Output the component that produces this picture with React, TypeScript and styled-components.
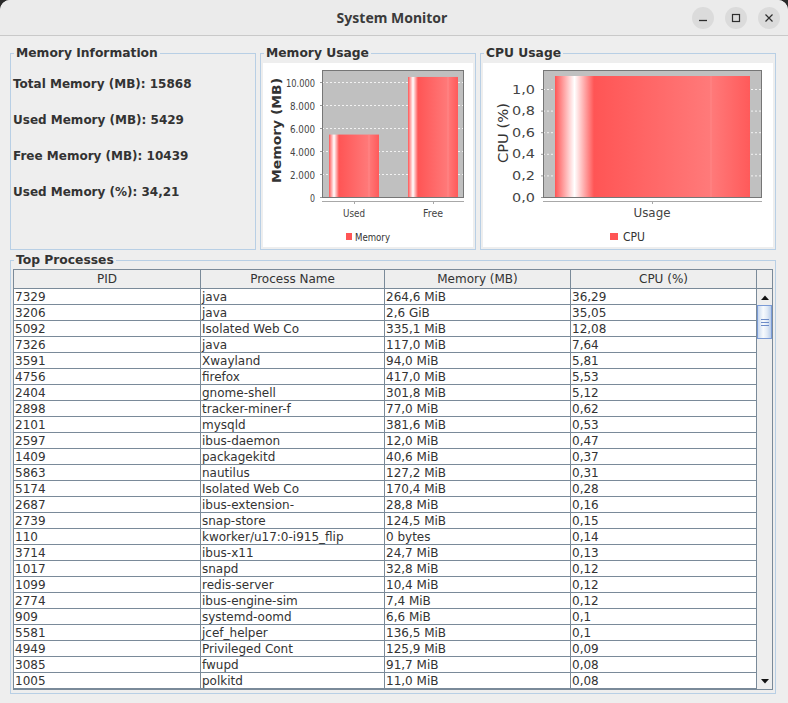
import React from "react";
import styled, { createGlobalStyle } from "styled-components";

const GlobalStyle = createGlobalStyle`
  html, body { margin: 0; padding: 0; background: #2a2a2a; }
  #root { width: 788px; height: 703px; }
  * { box-sizing: border-box; }
`;

const Window = styled.div`
  width: 788px;
  height: 703px;
  background: #eeeeee;
  border-radius: 10px 10px 0 0;
  overflow: hidden;
  display: flex;
  flex-direction: column;
  font-family: "DejaVu Sans", "Liberation Sans", sans-serif;
  color: #333333;
`;

const TitleBar = styled.header`
  height: 36px;
  flex: none;
  display: grid;
  grid-template-columns: 1fr auto 1fr;
  align-items: center;
  background: #ebebeb;
  border-bottom: 1px solid #c9c9c9;
`;

const TitleText = styled.div`
  grid-column: 2;
  font-family: "Noto Sans", "DejaVu Sans", sans-serif;
  font-weight: 700;
  font-size: 14px;
  color: #3b3b3b;
  transform: translateX(-2px);
`;

const WinButtons = styled.div`
  grid-column: 3;
  justify-self: end;
  display: flex;
  align-items: center;
  gap: 11px;
  padding-right: 8px;
`;

const WinButton = styled.div`
  width: 22px;
  height: 22px;
  border-radius: 50%;
  background: #dbdbdb;
  display: flex;
  align-items: center;
  justify-content: center;
`;

const Content = styled.main`
  flex: 1;
  display: flex;
  flex-direction: column;
  gap: 3px;
  padding: 10px 12px 9px 10px;
`;

const TopRow = styled.div`
  display: grid;
  grid-template-columns: 246px 216px 296px;
  column-gap: 4px;
  height: 204px;
`;

const Panel = styled.fieldset<{ $height?: number }>`
  margin: 0;
  min-width: 0;
  border: 1px solid #b8cfe5;
  padding: 0 2px 2px 2px;
  display: flex;
  flex-direction: column;
  height: ${(p) => (p.$height ? `${p.$height}px` : "100%")};
`;

const PanelTitle = styled.legend`
  font-weight: 700;
  font-size: 12.3px;
  line-height: 14px;
  padding: 0 2px;
  margin-left: 1px;
  color: #333333;
`;

const InfoList = styled.div`
  padding-top: 6px;
  display: flex;
  flex-direction: column;
`;

const InfoLabel = styled.div`
  height: 36px;
  line-height: 36px;
  font-weight: 700;
  font-size: 12px;
  white-space: nowrap;
`;

const ChartBox = styled.div<{ $w: number }>`
  margin-top: 3px;
  width: ${(p) => p.$w}px;
  height: 184px;
  background: #ffffff;
  flex: none;
  svg {
    display: block;
  }
`;

const Pane = styled.div`
  margin-top: 2px;
  border: 1px solid #7a8a99;
  display: grid;
  grid-template-columns: 743px 15px;
  grid-template-rows: 19px 400px;
  background: #ffffff;
`;

const ColGrid = styled.div`
  display: grid;
  grid-template-columns: 187px 184px 186px 186px;
`;

const HeaderCell = styled.div`
  background: #eeeeee;
  border-right: 1px solid #7a8a99;
  border-bottom: 1px solid #7a8a99;
  text-align: center;
  font-size: 12px;
  line-height: 17px;
  padding-top: 1px;
  color: #333333;
`;

const Corner = styled.div`
  background: #eeeeee;
  border-bottom: 1px solid #7a8a99;
`;

const Body = styled.div`
  display: flex;
  flex-direction: column;
`;

const Cell = styled.div`
  height: 16px;
  border-right: 1px solid #7a8a99;
  border-bottom: 1px solid #7a8a99;
  padding: 1px 0 0 1px;
  font-size: 12px;
  line-height: 14px;
  white-space: nowrap;
  overflow: hidden;
  color: #333333;
  background: #ffffff;
`;

const ScrollBar = styled.div`
  display: flex;
  flex-direction: column;
  background: #eeeeee;
`;

const ArrowButton = styled.div`
  height: 16px;
  flex: none;
  display: flex;
  align-items: center;
  justify-content: center;
  background: #eeeeee;
`;

const Thumb = styled.div`
  height: 34px;
  flex: none;
  border: 1px solid #7b9bd6;
  background: linear-gradient(to right, #c9d9ef, #f7fafd 40%, #e1eaf6 70%, #b9cde9);
  display: flex;
  flex-direction: column;
  align-items: center;
  justify-content: center;
  gap: 2px;
`;

const Grip = styled.div`
  width: 8px;
  height: 1px;
  background: #6d8cc8;
`;

const Track = styled.div`
  flex: 1;
`;

type Tick = { label: string; y: number; w: number };
type Bar = { x0: number; x1: number; top: number };
type Cat = { text: string; cx: number; w: number };

interface ChartProps {
  id: string;
  width: number;
  plot: { x0: number; x1: number; y0: number; y1: number };
  ticks: Tick[];
  tickFont: number;
  tickRight: number;
  yLabel: { text: string; cx: number; cy: number; len: number; size: number; bold: boolean };
  bars: Bar[];
  cats: Cat[];
  catFont: number;
  legend: { sx: number; sw: number; text: string; tx: number; tw: number; size: number };
}

const Chart: React.FC<ChartProps> = ({ id, width, plot, ticks, tickFont, tickRight, yLabel, bars, cats, catFont, legend }) => {
  const H = 184;
  return (
    <svg width={width} height={H} viewBox={`0 0 ${width} ${H}`}>
      <defs>
        <linearGradient id={id} x1="0" y1="0" x2="1" y2="0">
          <stop offset="0" stopColor="#ff5555" />
          <stop offset="0.1" stopColor="#ffffff" />
          <stop offset="0.2" stopColor="#ff5555" />
          <stop offset="0.8" stopColor="#ff7a7a" />
          <stop offset="1" stopColor="#ff5a5a" />
        </linearGradient>
      </defs>
      <rect x={plot.x0} y={plot.y0} width={plot.x1 - plot.x0} height={plot.y1 - plot.y0} fill="#c0c0c0" />
      {ticks.map((t) => (
        <line key={"g" + t.label} x1={plot.x0} x2={plot.x1} y1={t.y + 0.5} y2={t.y + 0.5} stroke="#ffffff" strokeWidth={0.8} strokeDasharray="2 2" />
      ))}
      {bars.map((b, i) => (
        <g key={"b" + i}>
          <rect x={b.x0} y={b.top} width={b.x1 - b.x0} height={plot.y1 - b.top} fill={`url(#${id})`} />
          <line x1={b.x0 + (b.x1 - b.x0) * 0.8} x2={b.x0 + (b.x1 - b.x0) * 0.8} y1={b.top} y2={plot.y1} stroke="#ff9090" strokeWidth={0.6} />
        </g>
      ))}
      <rect x={plot.x0 + 0.5} y={plot.y0 + 0.5} width={plot.x1 - plot.x0 - 1} height={plot.y1 - plot.y0} fill="none" stroke="#767676" strokeWidth={1} />
      {ticks.map((t) => (
        <g key={"t" + t.label}>
          <line x1={plot.x0 - 2} x2={plot.x0} y1={t.y + 0.5} y2={t.y + 0.5} stroke="#999999" strokeWidth={1} />
          <text
            x={tickRight - t.w}
            y={t.y + 0.5}
            dominantBaseline="central"
            fontFamily="DejaVu Sans, sans-serif"
            fontSize={tickFont}
            fill="#444444"
            textLength={t.w}
            lengthAdjust="spacingAndGlyphs"
          >
            {t.label}
          </text>
        </g>
      ))}
      <text
        transform={`translate(${yLabel.cx} ${yLabel.cy}) rotate(-90)`}
        x={-yLabel.len / 2}
        y={0}
        dominantBaseline="central"
        fontFamily="DejaVu Sans, sans-serif"
        fontSize={yLabel.size}
        fontWeight={yLabel.bold ? 700 : 400}
        fill="#333333"
        textLength={yLabel.len}
        lengthAdjust="spacingAndGlyphs"
      >
        {yLabel.text}
      </text>
      <line x1={plot.x0} x2={plot.x1} y1={138.5} y2={138.5} stroke="#a8a8a8" strokeWidth={1} />
      {cats.map((c) => (
        <g key={"c" + c.text}>
          <line x1={c.cx + 0.5} x2={c.cx + 0.5} y1={138} y2={141} stroke="#a8a8a8" strokeWidth={1} />
          <text
            x={c.cx - c.w / 2}
            y={150}
            dominantBaseline="central"
            fontFamily="DejaVu Sans, sans-serif"
            fontSize={catFont}
            fill="#444444"
            textLength={c.w}
            lengthAdjust="spacingAndGlyphs"
          >
            {c.text}
          </text>
        </g>
      ))}
      <rect x={legend.sx} y={170} width={legend.sw} height={7} fill="#ff5555" />
      <text
        x={legend.tx}
        y={173.5}
        dominantBaseline="central"
        fontFamily="DejaVu Sans, sans-serif"
        fontSize={legend.size}
        fill="#333333"
        textLength={legend.tw}
        lengthAdjust="spacingAndGlyphs"
      >
        {legend.text}
      </text>
    </svg>
  );
};

const memScale = (v: number) => 134 - v * 0.0115;

const rows: [string, string, string, string][] = [
  ["7329", "java", "264,6 MiB", "36,29"],
  ["3206", "java", "2,6 GiB", "35,05"],
  ["5092", "Isolated Web Co", "335,1 MiB", "12,08"],
  ["7326", "java", "117,0 MiB", "7,64"],
  ["3591", "Xwayland", "94,0 MiB", "5,81"],
  ["4756", "firefox", "417,0 MiB", "5,53"],
  ["2404", "gnome-shell", "301,8 MiB", "5,12"],
  ["2898", "tracker-miner-f", "77,0 MiB", "0,62"],
  ["2101", "mysqld", "381,6 MiB", "0,53"],
  ["2597", "ibus-daemon", "12,0 MiB", "0,47"],
  ["1409", "packagekitd", "40,6 MiB", "0,37"],
  ["5863", "nautilus", "127,2 MiB", "0,31"],
  ["5174", "Isolated Web Co", "170,4 MiB", "0,28"],
  ["2687", "ibus-extension-", "28,8 MiB", "0,16"],
  ["2739", "snap-store", "124,5 MiB", "0,15"],
  ["110", "kworker/u17:0-i915_flip", "0 bytes", "0,14"],
  ["3714", "ibus-x11", "24,7 MiB", "0,13"],
  ["1017", "snapd", "32,8 MiB", "0,12"],
  ["1099", "redis-server", "10,4 MiB", "0,12"],
  ["2774", "ibus-engine-sim", "7,4 MiB", "0,12"],
  ["909", "systemd-oomd", "6,6 MiB", "0,1"],
  ["5581", "jcef_helper", "136,5 MiB", "0,1"],
  ["4949", "Privileged Cont", "125,9 MiB", "0,09"],
  ["3085", "fwupd", "91,7 MiB", "0,08"],
  ["1005", "polkitd", "11,0 MiB", "0,08"],
];

const Tri: React.FC<{ up: boolean }> = ({ up }) => (
  <svg width="8" height="5" viewBox="0 0 8 5">
    <path d={up ? "M0 5 L4 0.5 L8 5 Z" : "M0 0 L4 4.5 L8 0 Z"} fill="#111111" />
  </svg>
);

export default function App() {
  const cpuTicks: Tick[] = ["0,0", "0,2", "0,4", "0,6", "0,8", "1,0"].map((l, i) => ({
    label: l,
    y: 134 - i * 21.6,
    w: 23,
  }));
  const memTicks: Tick[] = [
    { label: "0", y: memScale(0), w: 5 },
    { label: "2.000", y: memScale(2000), w: 25 },
    { label: "4.000", y: memScale(4000), w: 25 },
    { label: "6.000", y: memScale(6000), w: 25 },
    { label: "8.000", y: memScale(8000), w: 25 },
    { label: "10.000", y: memScale(10000), w: 29 },
  ];
  return (
    <>
      <GlobalStyle />
      <Window>
        <TitleBar>
          <TitleText>System Monitor</TitleText>
          <WinButtons>
            <WinButton>
              <svg width="10" height="10" viewBox="0 0 10 10">
                <line x1="1" y1="7.5" x2="9" y2="7.5" stroke="#2e2e2e" strokeWidth="1.3" />
              </svg>
            </WinButton>
            <WinButton>
              <svg width="10" height="10" viewBox="0 0 10 10">
                <rect x="1.5" y="1.5" width="7" height="7" fill="none" stroke="#2e2e2e" strokeWidth="1.2" />
              </svg>
            </WinButton>
            <WinButton>
              <svg width="10" height="10" viewBox="0 0 10 10">
                <path d="M1.5 1.5 L8.5 8.5 M8.5 1.5 L1.5 8.5" stroke="#2e2e2e" strokeWidth="1.2" />
              </svg>
            </WinButton>
          </WinButtons>
        </TitleBar>
        <Content>
          <TopRow>
            <Panel>
              <PanelTitle>Memory Information</PanelTitle>
              <InfoList>
                <InfoLabel>Total Memory (MB): 15868</InfoLabel>
                <InfoLabel>Used Memory (MB): 5429</InfoLabel>
                <InfoLabel>Free Memory (MB): 10439</InfoLabel>
                <InfoLabel>Used Memory (%): 34,21</InfoLabel>
              </InfoList>
            </Panel>
            <Panel>
              <PanelTitle>Memory Usage</PanelTitle>
              <ChartBox $w={210}>
                <Chart
                  id="memGrad"
                  width={210}
                  plot={{ x0: 59, x1: 201, y0: 7, y1: 134 }}
                  ticks={memTicks}
                  tickFont={10.5}
                  tickRight={52}
                  yLabel={{ text: "Memory (MB)", cx: 14, cy: 67.5, len: 105, size: 12, bold: true }}
                  bars={[
                    { x0: 66, x1: 116, top: memScale(5429) },
                    { x0: 145, x1: 195, top: memScale(10439) },
                  ]}
                  cats={[
                    { text: "Used", cx: 91, w: 22 },
                    { text: "Free", cx: 170, w: 20 },
                  ]}
                  catFont={10.5}
                  legend={{ sx: 83, sw: 6, text: "Memory", tx: 92, tw: 35, size: 10.5 }}
                />
              </ChartBox>
            </Panel>
            <Panel>
              <PanelTitle>CPU Usage</PanelTitle>
              <ChartBox $w={290}>
                <Chart
                  id="cpuGrad"
                  width={290}
                  plot={{ x0: 60, x1: 279, y0: 7, y1: 134 }}
                  ticks={cpuTicks}
                  tickFont={11.5}
                  tickRight={52}
                  yLabel={{ text: "CPU (%)", cx: 20, cy: 70, len: 60, size: 14, bold: false }}
                  bars={[{ x0: 72, x1: 267, top: 13 }]}
                  cats={[{ text: "Usage", cx: 169, w: 37 }]}
                  catFont={11.5}
                  legend={{ sx: 127, sw: 8, text: "CPU", tx: 140, tw: 22, size: 11.5 }}
                />
              </ChartBox>
            </Panel>
          </TopRow>
          <Panel $height={441}>
            <PanelTitle>Top Processes</PanelTitle>
            <Pane>
              <ColGrid>
                <HeaderCell>PID</HeaderCell>
                <HeaderCell>Process Name</HeaderCell>
                <HeaderCell>Memory (MB)</HeaderCell>
                <HeaderCell>CPU (%)</HeaderCell>
              </ColGrid>
              <Corner />
              <Body>
                {rows.map((r, i) => (
                  <ColGrid key={i}>
                    {r.map((c, j) => (
                      <Cell key={j}>{c}</Cell>
                    ))}
                  </ColGrid>
                ))}
              </Body>
              <ScrollBar>
                <ArrowButton>
                  <Tri up />
                </ArrowButton>
                <Thumb>
                  <Grip />
                  <Grip />
                  <Grip />
                </Thumb>
                <Track />
                <ArrowButton>
                  <Tri up={false} />
                </ArrowButton>
              </ScrollBar>
            </Pane>
          </Panel>
        </Content>
      </Window>
    </>
  );
}
